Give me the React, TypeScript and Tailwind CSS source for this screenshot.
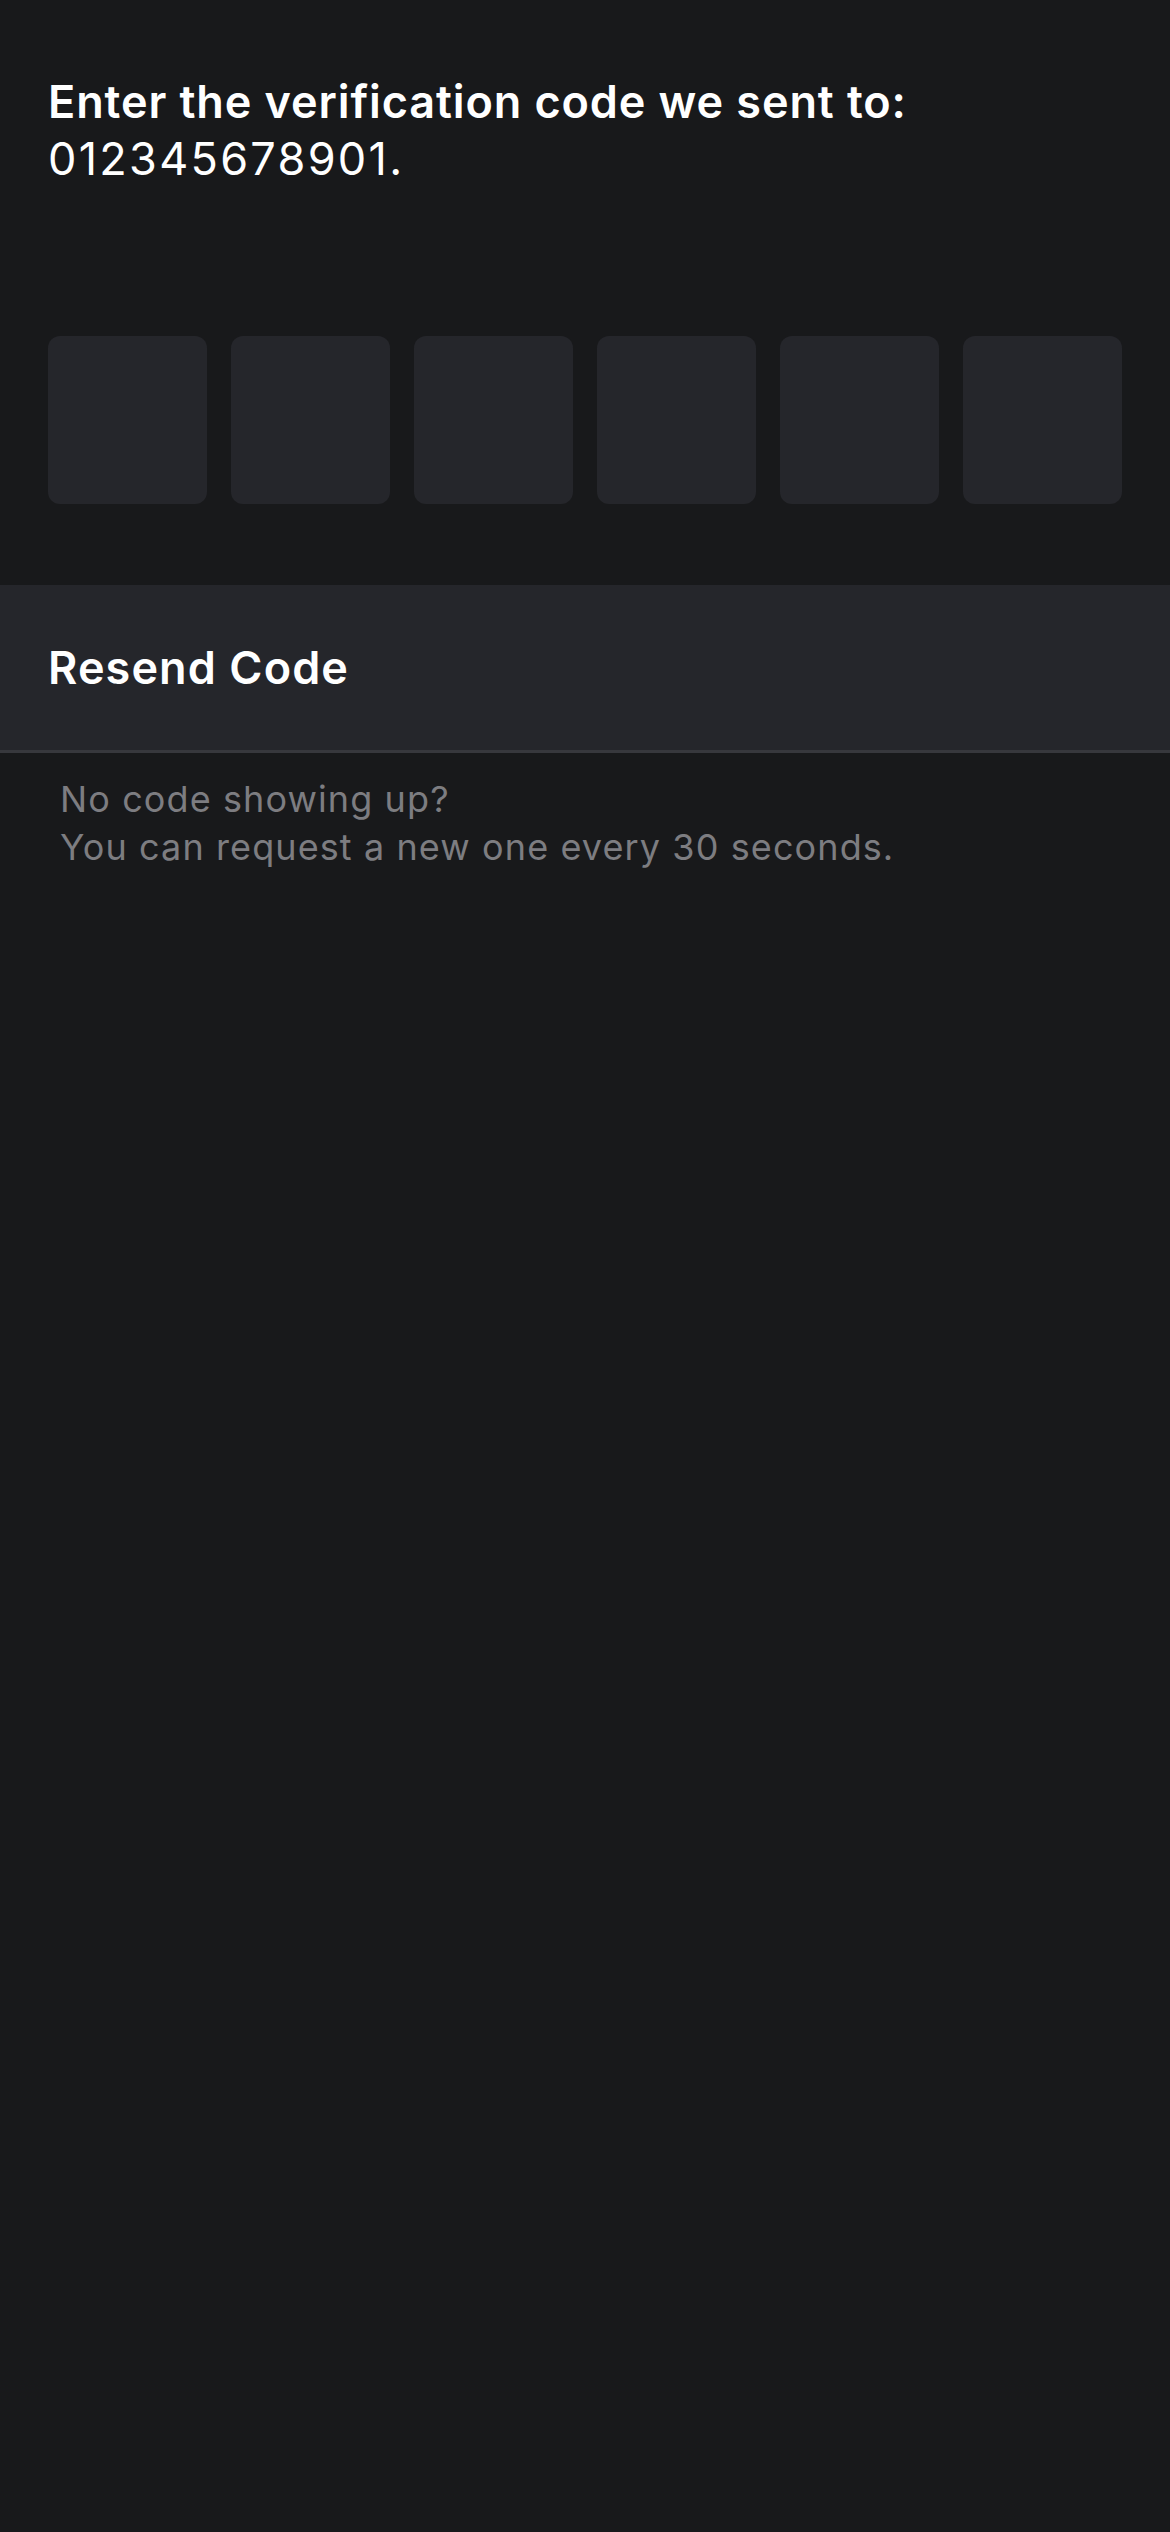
import React from 'react';

const digits = [0, 1, 2, 3, 4, 5];

export default function App() {
  return (
    <div className="min-h-[2532px] w-full bg-[#18191b] font-['Inter','Liberation_Sans',sans-serif] text-white">
      {/* Heading */}
      <div className="px-12 pt-[73px]">
        <h1 className="text-[45px] leading-[57px] font-semibold tracking-[0.9px]">
          Enter the verification code we sent to:
        </h1>
        <p className="text-[45px] leading-[57px] font-normal tracking-[2.3px]">012345678901.</p>
      </div>

      {/* Code boxes */}
      <div className="mt-[149px] flex gap-6 px-12">
        {digits.map((d) => (
          <div key={d} className="h-[168px] flex-1 rounded-xl bg-[#25262b]" />
        ))}
      </div>

      {/* Resend */}
      <div className="mt-[81px] flex h-[168px] items-center border-b-[3px] border-[#37383d] bg-[#25262b] px-12">
        <span className="text-[45px] font-semibold tracking-[1.1px]">Resend Code</span>
      </div>

      <div className="px-[60px] pt-[22px] text-[36px] leading-[48px] tracking-[1.1px] text-[#7d7d81]">
        <p>No code showing up?</p>
        <p>You can request a new one every 30 seconds.</p>
      </div>
    </div>
  );
}
